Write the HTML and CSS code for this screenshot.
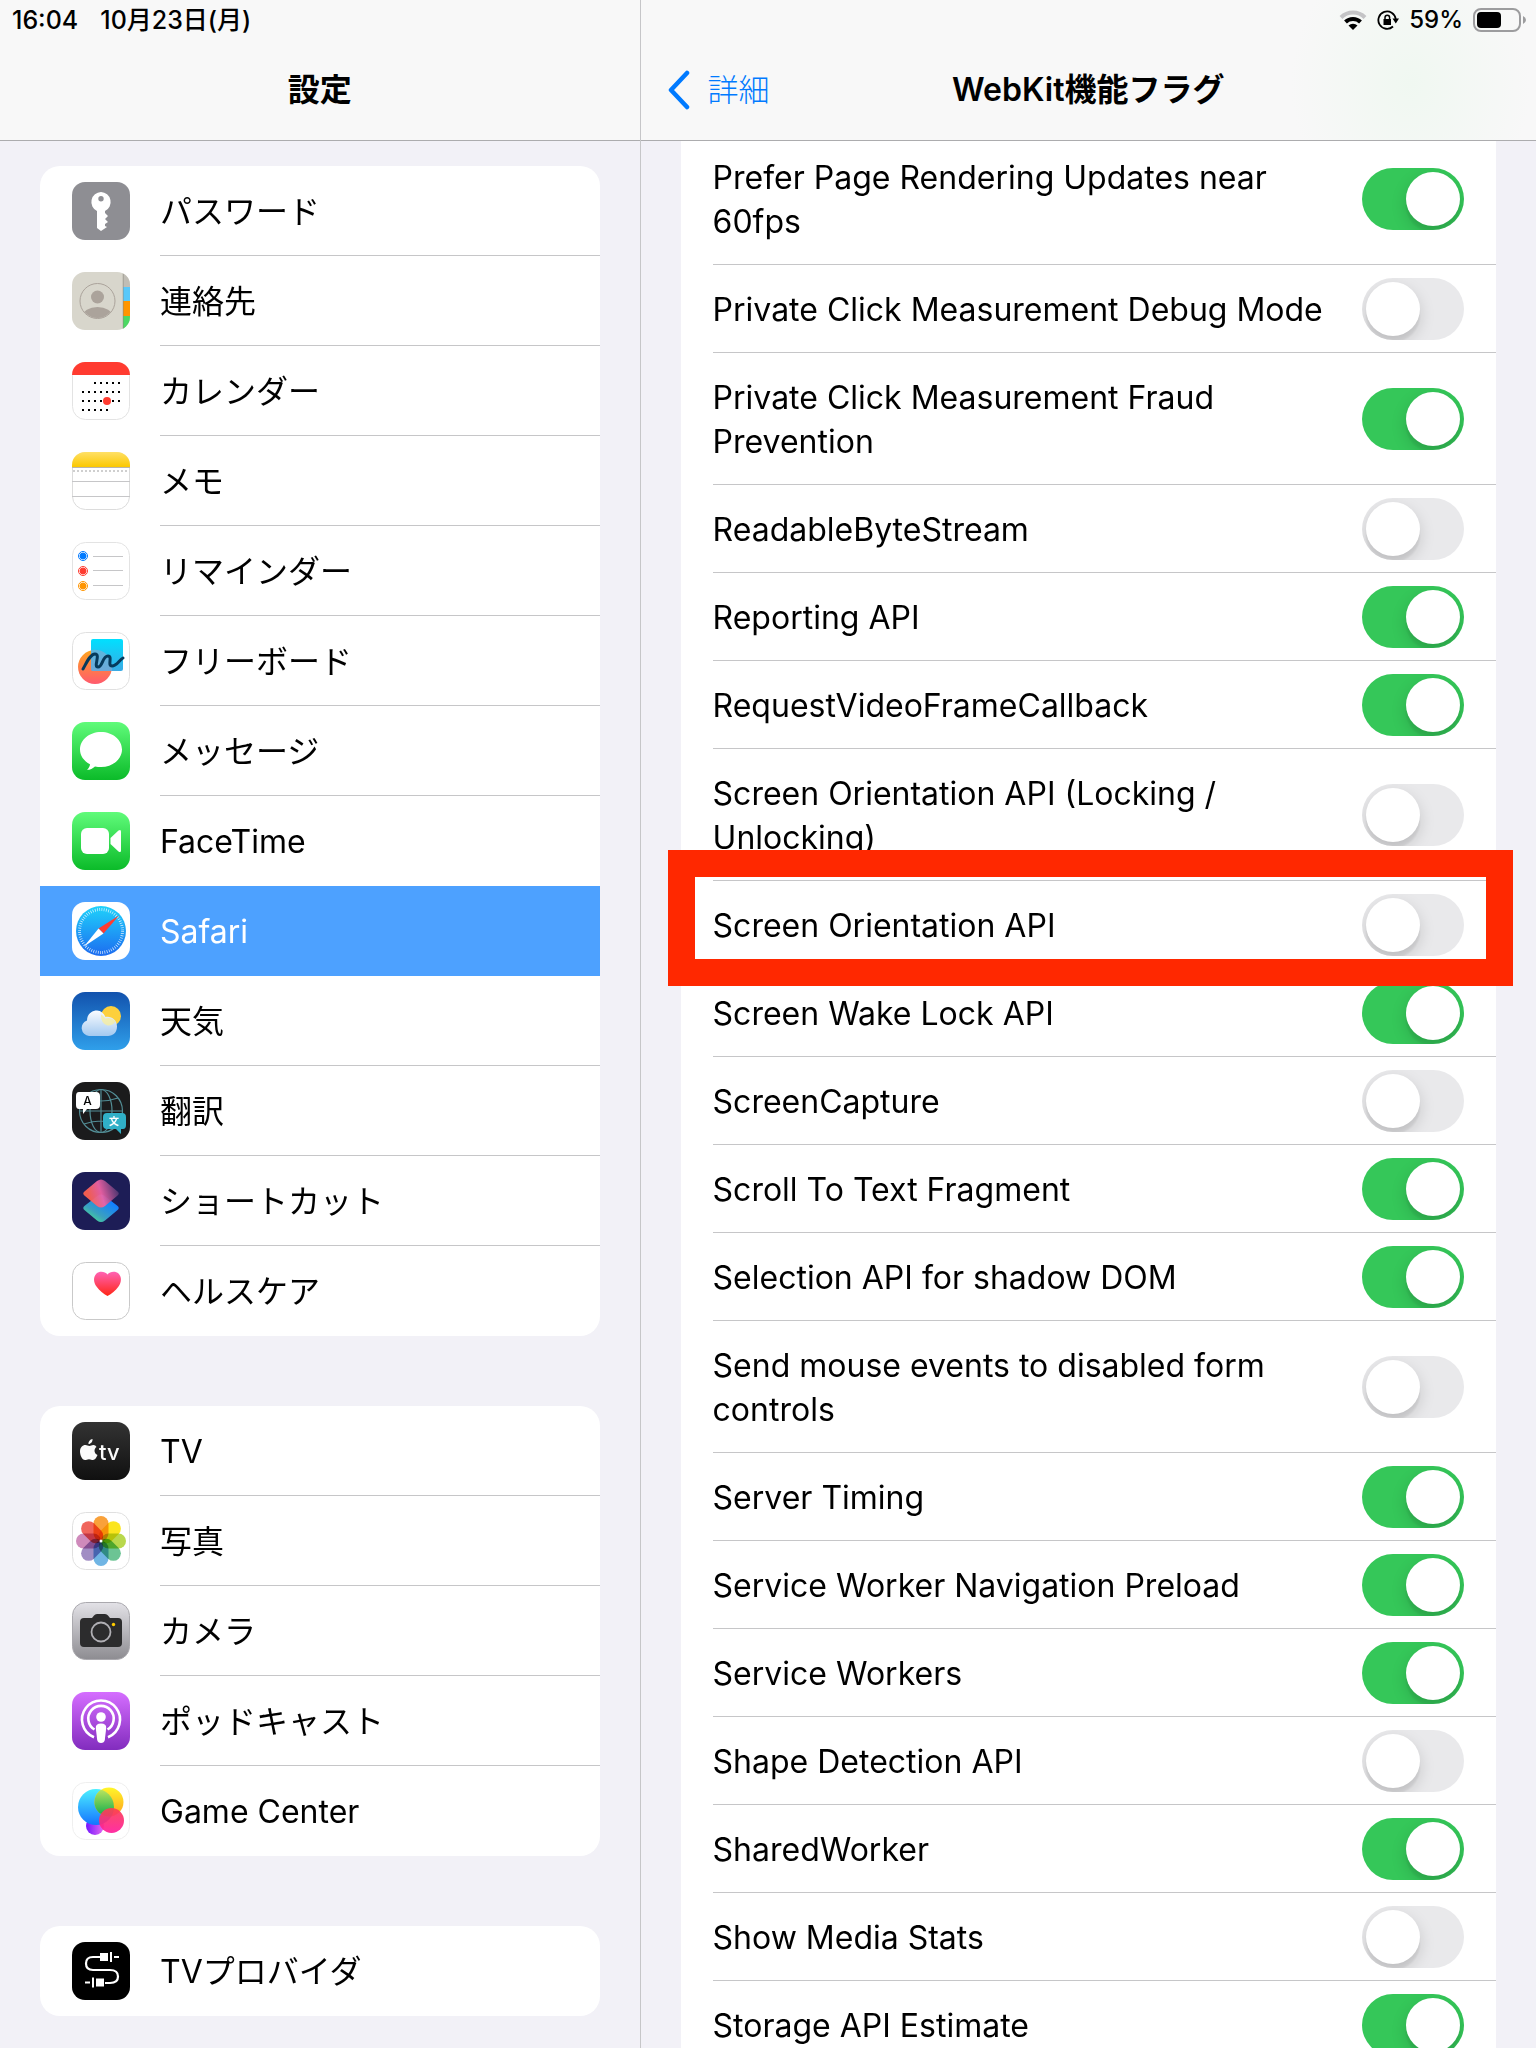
FILE: index.html
```html
<!DOCTYPE html>
<html lang="ja">
<head>
    <meta charset="UTF-8">
    <meta name="viewport" content="width=device-width, initial-scale=1.0">
    <title>設定</title>
    <link rel="stylesheet" href="styles.css">
</head>
<body>
    <!-- Dégradés partagés par les icônes -->
    <svg class="defs" width="0" height="0" aria-hidden="true">
        <defs>
            <linearGradient id="gGreen" x2="0" y2="1"><stop offset="0" stop-color="#60fb7a"/><stop offset="1" stop-color="#0bbb29"/></linearGradient>
            <linearGradient id="gYellow" x2="0" y2="1"><stop offset="0" stop-color="#ffe066"/><stop offset="1" stop-color="#fbc800"/></linearGradient>
            <linearGradient id="gCoral" x2="0" y2="1"><stop offset="0" stop-color="#ffa51e"/><stop offset="1" stop-color="#ff5a6e"/></linearGradient>
            <linearGradient id="gCyan" x2="0" y2="1"><stop offset="0" stop-color="#00e0ff"/><stop offset="1" stop-color="#3aaae4"/></linearGradient>
            <linearGradient id="gSafari" x2="0" y2="1"><stop offset="0" stop-color="#1fd2fb"/><stop offset="1" stop-color="#1d6cf0"/></linearGradient>
            <linearGradient id="gSky" x2="0" y2="1"><stop offset="0" stop-color="#1252ad"/><stop offset="1" stop-color="#2f9fea"/></linearGradient>
            <linearGradient id="gCloud" x2="0" y2="1"><stop offset="0" stop-color="#fafcff"/><stop offset="1" stop-color="#a3c9f0"/></linearGradient>
            <linearGradient id="gShort1" x1=".2" y1=".8" x2="1" y2=".6"><stop offset="0" stop-color="#ff6250"/><stop offset=".45" stop-color="#f062a5"/><stop offset="1" stop-color="#5a3a75"/></linearGradient>
            <linearGradient id="gShort2" x1=".2" y1="1" x2=".8" y2=".3"><stop offset="0" stop-color="#4ae08f"/><stop offset=".4" stop-color="#3aa0c0"/><stop offset="1" stop-color="#1280ff"/></linearGradient>
            <linearGradient id="gHeart" x2="0" y2="1"><stop offset="0" stop-color="#ff62b4"/><stop offset="1" stop-color="#ff2616"/></linearGradient>
            <linearGradient id="gTv" x2="0" y2="1"><stop offset="0" stop-color="#333"/><stop offset="1" stop-color="#101010"/></linearGradient>
            <linearGradient id="gCamera" x2="0" y2="1"><stop offset="0" stop-color="#e3e2e7"/><stop offset="1" stop-color="#8d8c91"/></linearGradient>
            <linearGradient id="gPodcast" x2="0" y2="1"><stop offset="0" stop-color="#d56eff"/><stop offset="1" stop-color="#822cbe"/></linearGradient>
            <linearGradient id="gGame1" x2="0" y2="1"><stop offset="0" stop-color="#4cf0ff"/><stop offset="1" stop-color="#1474ff"/></linearGradient>
            <linearGradient id="gGame2" x2="0" y2="1"><stop offset="0" stop-color="#fff62a"/><stop offset="1" stop-color="#ff9f1c"/></linearGradient>
            <linearGradient id="gGame3" x2="0" y2="1"><stop offset="0" stop-color="#fb4050"/><stop offset="1" stop-color="#ff1c9c"/></linearGradient>
            <linearGradient id="gGame4"><stop offset="0" stop-color="#7216ff"/><stop offset="1" stop-color="#e66af0"/></linearGradient>
            <linearGradient id="gGame5" x2="0" y2="1"><stop offset="0" stop-color="#c8e860"/><stop offset="1" stop-color="#0cab4c"/></linearGradient>
            <clipPath id="clipIcon"><rect width="58" height="58" rx="13"/></clipPath>
            <clipPath id="clipFace"><circle cx="25.500" cy="29" r="17"/></clipPath>
            <clipPath id="clipGame"><circle cx="24" cy="25" r="18"/></clipPath>
        </defs>
    </svg>

    <div class="screen">
        <!-- Colonne de gauche -->
        <aside class="sidebar">
            <header class="bar">
                <div class="status status-left">
                    <span>16:04</span>
                    <span>10月23日(月)</span>
                </div>
                <div class="nav"><h1 class="title">設定</h1></div>
            </header>

            <nav class="groups">
                <ul class="group">
                    <li><a class="app" href="#"><svg class="icon" viewBox="0 0 58 58"><rect width="58" height="58" rx="13" fill="#8e8e93"/><path fill="#fff" fill-rule="evenodd" d="M29 10a10 10 0 0 1 4 19v2l3 3-3 3 3 3-3 2v2l2 1-6 4-4-3V29a10 10 0 0 1 4-19zm0 4a2.700 2.700 0 1 0 0 5.400 2.700 2.700 0 0 0 0-5.400z"/></svg><span class="app-name">パスワード</span></a></li>
                    <li><a class="app" href="#"><svg class="icon" viewBox="0 0 58 58"><g clip-path="url(#clipIcon)"><rect width="58" height="58" fill="#d8d6cc"/><path fill="#c0bdb5" d="M51 0h7v15h-7z"/><path fill="#5ac8fa" d="M51 15h7v14h-7z"/><path fill="#ff9500" d="M51 29h7v15h-7z"/><path fill="#4cd964" d="M51 44h7v14h-7z"/><path stroke="#8c8880" stroke-width=".6" d="M51.200 0v58"/></g><g clip-path="url(#clipFace)" fill="#aba39b"><circle cx="25.500" cy="25" r="6.500"/><ellipse cx="25.500" cy="44" rx="15" ry="9"/></g><circle cx="25.500" cy="29" r="17.500" fill="none" stroke="#aba39b"/></svg><span class="app-name">連絡先</span></a></li>
                    <li><a class="app" href="#"><svg class="icon" viewBox="0 0 58 58"><rect x=".5" y=".5" width="57" height="57" rx="13" fill="#fff" stroke="#e3e3e3"/><path fill="#ff3b30" d="M0 13A13 13 0 0 1 13 0h32a13 13 0 0 1 13 13z"/><g stroke="#000" stroke-width="2" stroke-dasharray="2 4"><path d="M22 21h26M10 30h38M10 39h38M10 48h26"/></g><circle cx="35" cy="39" r="4" fill="#ff3b30"/></svg><span class="app-name">カレンダー</span></a></li>
                    <li><a class="app" href="#"><svg class="icon" viewBox="0 0 58 58"><rect x=".5" y=".5" width="57" height="57" rx="13" fill="#fff" stroke="#dcdcdc"/><path fill="url(#gYellow)" d="M0 15v-2A13 13 0 0 1 13 0h32a13 13 0 0 1 13 13v2z"/><path stroke="#b9b5aa" d="M0 15.500h58"/><path stroke="#cfcfcf" stroke-width="2" stroke-dasharray="2 2" d="M1 19h56"/><path stroke="#c6c6c8" d="M0 29.500h58M0 44.500h58"/></svg><span class="app-name">メモ</span></a></li>
                    <li><a class="app" href="#"><svg class="icon" viewBox="0 0 58 58"><rect x=".5" y=".5" width="57" height="57" rx="13" fill="#fff" stroke="#e3e3e3"/><path stroke="#c6c6c8" d="M21 14.500h30M21 28.500h30M21 43.500h30"/><g fill="#007aff" stroke="#007aff"><circle cx="11" cy="14" r="3"/><circle cx="11" cy="14" r="4.500" fill="none"/></g><g fill="#ff3b30" stroke="#ff3b30"><circle cx="11" cy="29" r="3"/><circle cx="11" cy="29" r="4.500" fill="none"/></g><g fill="#ff9500" stroke="#ff9500"><circle cx="11" cy="44" r="3"/><circle cx="11" cy="44" r="4.500" fill="none"/></g></svg><span class="app-name">リマインダー</span></a></li>
                    <li><a class="app" href="#"><svg class="icon" viewBox="0 0 58 58"><rect x=".5" y=".5" width="57" height="57" rx="13" fill="#fff" stroke="#e0e0e0"/><circle cx="23" cy="35" r="17" fill="url(#gCoral)"/><rect x="19" y="7" width="32" height="32" rx="2" fill="url(#gCyan)"/><path fill="#8ea6cf" opacity=".6" d="M19 18q18-2 21 17v4H21q-2 0-2-2z"/><path fill="none" stroke="#063a5c" stroke-width="3" stroke-linecap="round" d="M11 37c3-5 7-15 12-15 6 0-2 13 3 13 5 0 4-11 10-11 5 0-1 10 4 10 5 0 7-6 11-8"/></svg><span class="app-name">フリーボード</span></a></li>
                    <li><a class="app" href="#"><svg class="icon" viewBox="0 0 58 58"><rect width="58" height="58" rx="13" fill="url(#gGreen)"/><path fill="#fff" d="M29 10c12 0 21 8 21 17.500S41 45 29 45c-2 0-4 0-6-.6-2 2-5 3.400-8 3.400 1.500-1.200 3-3.500 3-5.500C12 39 8 34 8 27.500 8 18 17 10 29 10z"/></svg><span class="app-name">メッセージ</span></a></li>
                    <li><a class="app" href="#"><svg class="icon" viewBox="0 0 58 58"><rect width="58" height="58" rx="13" fill="url(#gGreen)"/><rect x="9" y="16" width="28" height="26" rx="6" fill="#fff"/><path fill="#fff" d="M38.500 26l8-7.500q2.500-1.500 2.500 1v19q0 2.500-2.500 1l-8-7.500z"/></svg><span class="app-name">FaceTime</span></a></li>
                    <li><a class="app selected" href="#" aria-current="page"><svg class="icon" viewBox="0 0 58 58"><rect width="58" height="58" rx="13" fill="#fff"/><circle cx="29" cy="29" r="25" fill="url(#gSafari)"/><circle cx="29" cy="29" r="21.500" fill="none" stroke="#fff" stroke-width="3" stroke-dasharray=".7 1.550" opacity=".85"/><path fill="#ff3b30" d="M47 13.500L26.500 26.500l5 5z"/><path fill="#fff" d="M12 44.500L31.500 31.500l-5-5z"/></svg><span class="app-name">Safari</span></a></li>
                    <li><a class="app" href="#"><svg class="icon" viewBox="0 0 58 58"><rect width="58" height="58" rx="13" fill="url(#gSky)"/><circle cx="39" cy="24" r="10" fill="#fdd03c"/><path fill="url(#gCloud)" d="M17 44a8 8 0 0 1-2-15.500C15 22 20 18.500 25 18.500c4 0 7 3 8.500 6.500 6-1 11.500 3 11.500 9.500 0 6-4 9.500-9 9.500z"/><path fill="#f6eda0" opacity=".8" d="M29 22.500q3 1.500 4 4 6-2 10.500 3-3 4.500-8 4-7-2-6.500-11z"/></svg><span class="app-name">天気</span></a></li>
                    <li><a class="app" href="#"><svg class="icon" viewBox="0 0 58 58"><rect width="58" height="58" rx="13" fill="#1b1b1c"/><g fill="none" stroke="#528d95" stroke-width="1.200"><circle cx="29" cy="29" r="21.500"/><ellipse cx="29" cy="29" rx="11" ry="21.500"/><path d="M29 7.500v43M7.500 29h43M12 16q17 6 34 0M12 42q17-6 34 0"/></g><path fill="#fff" d="M7 10h17q4 0 4 4v9q0 4-4 4h-9l-4 5v-5H7q-3 0-3-4v-9q0-4 3-4z"/><path fill="#30b0c7" d="M35 31h15q4 0 4 4v8q0 4-3 4h-2v5l-5-5h-9q-4 0-4-4v-8q0-4 4-4z"/><text class="glyph-a" x="15.500" y="23" text-anchor="middle">A</text><text class="glyph-b" x="42" y="43" text-anchor="middle">文</text></svg><span class="app-name">翻訳</span></a></li>
                    <li><a class="app" href="#"><svg class="icon" viewBox="0 0 58 58"><rect width="58" height="58" rx="13" fill="#1d1d56"/><path fill="url(#gShort2)" d="M26 23.500q3-2 6 0l13 10q3.500 2.500 0 5l-12 10q-4 3-8 0l-12-10q-3.500-2.500 0-5z"/><path fill="url(#gShort1)" opacity=".93" d="M25 9q4-3 8 0l12 10q3.500 2.500 0 5L33 34q-4 3-8 0L13 24q-3.500-2.500 0-5z"/></svg><span class="app-name">ショートカット</span></a></li>
                    <li><a class="app" href="#"><svg class="icon" viewBox="0 0 58 58"><rect x=".5" y=".5" width="57" height="57" rx="13" fill="#fff" stroke="#c9c9c9"/><path fill="url(#gHeart)" d="M35.500 12.500C38 9 44 9 46.500 11.500c3.500 3.500 3 9 0 13-3 4-7 7.500-11 9.500-4-2-8-5.500-11-9.500-3-4-3.500-9.500 0-13C27 9 33 9 35.500 12.500z"/></svg><span class="app-name">ヘルスケア</span></a></li>
                </ul>

                <ul class="group">
                    <li><a class="app" href="#"><svg class="icon" viewBox="0 0 58 58"><rect width="58" height="58" rx="13" fill="url(#gTv)"/><path fill="#fafafa" d="M20.500 17c.3 2.500-1.500 5-4 5-.2-2.400 1.800-4.700 4-5zM24.500 25c-3 2-2.500 6.500 1 8-1 2.500-2.500 5-4.500 5-1.500 0-2-.8-4-.8s-2.500.8-4 .8C10 38 8 33 8 29.500c0-4 2.500-6.500 5.500-6.500 1.500 0 2.500 1 4 1 1.200 0 2.500-1.200 4-1 1.200.1 2.400.8 3 2z"/><text class="glyph-tv" x="27" y="38">tv</text></svg><span class="app-name">TV</span></a></li>
                    <li><a class="app" href="#"><svg class="icon" viewBox="0 0 58 58"><rect x=".5" y=".5" width="57" height="57" rx="13" fill="#fff" stroke="#e0e0e0"/><g class="petals"><rect x="21.500" y="4" width="15" height="25" rx="7.500" fill="#f9a13a"/><rect x="21.500" y="4" width="15" height="25" rx="7.500" fill="#fbe51e" transform="rotate(45 29 29)"/><rect x="21.500" y="4" width="15" height="25" rx="7.500" fill="#b9d84c" transform="rotate(90 29 29)"/><rect x="21.500" y="4" width="15" height="25" rx="7.500" fill="#6cc494" transform="rotate(135 29 29)"/><rect x="21.500" y="4" width="15" height="25" rx="7.500" fill="#70b5e4" transform="rotate(180 29 29)"/><rect x="21.500" y="4" width="15" height="25" rx="7.500" fill="#a18dc4" transform="rotate(225 29 29)"/><rect x="21.500" y="4" width="15" height="25" rx="7.500" fill="#cf8abb" transform="rotate(270 29 29)"/><rect x="21.500" y="4" width="15" height="25" rx="7.500" fill="#f0655c" transform="rotate(315 29 29)"/></g><circle cx="29" cy="29" r="1.500" fill="#fff"/></svg><span class="app-name">写真</span></a></li>
                    <li><a class="app" href="#"><svg class="icon" viewBox="0 0 58 58"><rect x=".5" y=".5" width="57" height="57" rx="13" fill="url(#gCamera)" stroke="#aaa9ae"/><path fill="#2c2c2d" d="M12 16h8l2-2.500q1-1.500 3-1.500h8q2 0 3 1.500l2 2.500h8q4 0 4 4v21q0 4-4 4H12q-4 0-4-4V20q0-4 4-4z"/><circle cx="29" cy="30" r="9.500" fill="none" stroke="#b0afb4" stroke-width="1.800"/><circle cx="41.500" cy="22.500" r="1.700" fill="#fc0"/></svg><span class="app-name">カメラ</span></a></li>
                    <li><a class="app" href="#"><svg class="icon" viewBox="0 0 58 58"><rect width="58" height="58" rx="13" fill="url(#gPodcast)"/><g fill="none" stroke="#fff" stroke-width="2.600"><path d="M22 45.200a19 19 0 1 1 14 0"/><path d="M22.500 37.500a12.700 12.700 0 1 1 13 0"/></g><circle cx="29" cy="25" r="4.800" fill="#fff"/><path fill="#fff" d="M29 31.500q5.500 0 5.200 4.500l-1.400 12q-.6 3-3.800 3t-3.800-3l-1.400-12q-.3-4.500 5.200-4.500z"/></svg><span class="app-name">ポッドキャスト</span></a></li>
                    <li><a class="app" href="#"><svg class="icon" viewBox="0 0 58 58"><rect x=".5" y=".5" width="57" height="57" rx="13" fill="#fff" stroke="#efefef"/><circle cx="23" cy="44" r="9" fill="url(#gGame4)"/><circle cx="24" cy="25" r="18" fill="url(#gGame1)"/><circle cx="37" cy="20" r="14.500" fill="url(#gGame2)"/><circle cx="37" cy="20" r="14.500" fill="url(#gGame5)" clip-path="url(#clipGame)"/><circle cx="39.500" cy="38.500" r="12.500" fill="url(#gGame3)" opacity=".92"/></svg><span class="app-name">Game Center</span></a></li>
                </ul>

                <ul class="group">
                    <li><a class="app" href="#"><svg class="icon" viewBox="0 0 58 58"><rect width="58" height="58" rx="13"/><g fill="none" stroke="#fff" stroke-width="2.200"><path d="M28 15h-7q-7 0-7 6.500t7 6.500h17q8 0 8 6.500t-8 6.500h-5M42 15h5M13 40.500h5"/></g><path fill="#fff" d="M28 11h8v8h-8zM38 10h2v10h-2zM24 36.500h8v8h-8zM20 35.500h2v10h-2z"/></svg><span class="app-name">TVプロバイダ</span></a></li>
                </ul>
            </nav>
        </aside>

        <!-- Colonne de droite -->
        <main class="detail">
            <header class="bar bar-detail">
                <div class="status status-right">
                    <svg width="28" height="22" viewBox="0 0 28 22"><g fill="none" stroke-width="4"><path stroke="#c4c4c6" d="M2 8.500a17 17 0 0 1 24 0"/><path stroke="#000" d="M6.500 13a10.700 10.700 0 0 1 15 0"/></g><path d="M14 21l-4.500-4.500a6.400 6.400 0 0 1 9 0z"/></svg>
                    <svg width="22" height="22" viewBox="0 0 22 22"><path fill="none" stroke="#000" stroke-width="1.800" d="M16 17.500A8.700 8.700 0 1 1 18.700 10"/><path d="M15.500 9.500h6.500l-3.200 5zM6.500 10h7.500v6H6.500z"/><path fill="none" stroke="#000" stroke-width="1.500" d="M8 10V8.500a2.300 2.300 0 0 1 4.600 0V10"/></svg>
                    <span>59%</span>
                    <svg width="54" height="24" viewBox="0 0 54 24"><rect x="1" y="1" width="46" height="22" rx="7" fill="none" stroke="#9c9c9e" stroke-width="2"/><rect x="4" y="4" width="24" height="16" rx="4"/><path fill="#9c9c9e" d="M50 8q3 1.500 3 4t-3 4z"/></svg>
                </div>
                <div class="nav">
                    <a class="back" href="#"><svg width="24" height="40" viewBox="0 0 24 40"><path fill="none" stroke="#007aff" stroke-width="4.500" stroke-linecap="round" stroke-linejoin="round" d="M20 3L4 20l16 17"/></svg>詳細</a>
                    <h2 class="title">WebKit機能フラグ</h2>
                </div>
            </header>

            <ul class="flags">
                <li><label class="flag"><span>Prefer Page Rendering Updates near 60fps</span><input class="switch" type="checkbox" role="switch" checked></label></li>
                <li><label class="flag"><span>Private Click Measurement Debug Mode</span><input class="switch" type="checkbox" role="switch"></label></li>
                <li><label class="flag"><span>Private Click Measurement Fraud Prevention</span><input class="switch" type="checkbox" role="switch" checked></label></li>
                <li><label class="flag"><span>ReadableByteStream</span><input class="switch" type="checkbox" role="switch"></label></li>
                <li><label class="flag"><span>Reporting API</span><input class="switch" type="checkbox" role="switch" checked></label></li>
                <li><label class="flag"><span>RequestVideoFrameCallback</span><input class="switch" type="checkbox" role="switch" checked></label></li>
                <li><label class="flag"><span>Screen Orientation API (Locking / Unlocking)</span><input class="switch" type="checkbox" role="switch"></label></li>
                <li class="marked"><label class="flag"><span>Screen Orientation API</span><input class="switch" type="checkbox" role="switch"></label></li>
                <li><label class="flag"><span>Screen Wake Lock API</span><input class="switch" type="checkbox" role="switch" checked></label></li>
                <li><label class="flag"><span>ScreenCapture</span><input class="switch" type="checkbox" role="switch"></label></li>
                <li><label class="flag"><span>Scroll To Text Fragment</span><input class="switch" type="checkbox" role="switch" checked></label></li>
                <li><label class="flag"><span>Selection API for shadow DOM</span><input class="switch" type="checkbox" role="switch" checked></label></li>
                <li><label class="flag"><span>Send mouse events to disabled form controls</span><input class="switch" type="checkbox" role="switch"></label></li>
                <li><label class="flag"><span>Server Timing</span><input class="switch" type="checkbox" role="switch" checked></label></li>
                <li><label class="flag"><span>Service Worker Navigation Preload</span><input class="switch" type="checkbox" role="switch" checked></label></li>
                <li><label class="flag"><span>Service Workers</span><input class="switch" type="checkbox" role="switch" checked></label></li>
                <li><label class="flag"><span>Shape Detection API</span><input class="switch" type="checkbox" role="switch"></label></li>
                <li><label class="flag"><span>SharedWorker</span><input class="switch" type="checkbox" role="switch" checked></label></li>
                <li><label class="flag"><span>Show Media Stats</span><input class="switch" type="checkbox" role="switch"></label></li>
                <li><label class="flag"><span>Storage API Estimate</span><input class="switch" type="checkbox" role="switch" checked></label></li>
            </ul>
        </main>
    </div>
</body>
</html>
```

FILE: styles.css
```css
/* Global Styles */
* {
    box-sizing: border-box;
}

body {
    margin: 0;
    font-family: Inter, "Noto Sans CJK JP", sans-serif;
    font-size: 32px;
    line-height: 44px;
    color: #000;
    background-color: #f2f1f7;
}

ul {
    list-style: none;
    margin: 0;
    padding: 0;
}

a {
    color: inherit;
    text-decoration: none;
}

.defs {
    position: absolute;
}

.screen {
    display: flex;
    height: 100vh;
    overflow: hidden;
}

.sidebar {
    flex: 5;
    border-right: 1px solid #c6c6c8;
}

.detail {
    flex: 7;
}

/* Barres du haut */
.bar {
    position: relative;
    z-index: 1;
    background-color: #f8f8f8;
    border-bottom: 1px solid #acacae;
}

.bar-detail {
    background-image: radial-gradient(ellipse 120px 140px at 86% 60%, #f0f8f1, #f8f8f8);
}

.status {
    display: flex;
    align-items: center;
    height: 40px;
    font-size: 24px;
    font-weight: 500;
}

.status-left {
    gap: 22px;
    padding: 0 12px;
    font-size: 25px;
}

.status-right {
    justify-content: flex-end;
    gap: 10px;
    padding: 0 9px;
}

.nav {
    display: grid;
    grid-template-columns: 1fr auto 1fr;
    align-items: center;
    height: 100px;
}

.title {
    grid-column: 2;
    margin: 0;
    font-size: 32px;
    font-weight: 600;
}

.back {
    display: flex;
    align-items: center;
    gap: 17px;
    padding-left: 26px;
    font-size: 31px;
    font-weight: 300;
    color: #007aff;
}

/* Liste des apps */
.groups {
    display: flex;
    flex-direction: column;
    gap: 70px;
    padding: 25px 40px;
}

.group {
    background-color: #fff;
    border-radius: 20px;
}

.app {
    display: flex;
    gap: 30px;
    height: 90px;
    padding-left: 32px;
}

.icon {
    flex: none;
    width: 58px;
    height: 58px;
    margin-top: 16px;
}

.app-name {
    flex: 1;
    padding: 24px 0 21px;
    border-bottom: 1px solid #c6c6c8;
}

.group li:last-child .app-name,
.selected .app-name,
.group li:has(+ li .selected) .app-name {
    border-bottom-color: transparent;
}

.selected {
    color: #fff;
    background-color: #4da1ff;
}

.glyph-a {
    font-size: 12px;
    font-weight: 500;
}

.glyph-b {
    font-size: 10px;
    font-weight: 700;
    fill: #fff;
}

.glyph-tv {
    font-size: 22px;
    font-weight: 500;
    fill: #fafafa;
}

.petals {
    isolation: isolate;
}

.petals rect {
    mix-blend-mode: multiply;
}

/* Liste des drapeaux */
.flags {
    margin: -8px 40px 0;
    padding-left: 32px;
    background-color: #fff;
}

.flags li {
    position: relative;
    border-bottom: 1px solid #c6c6c8;
}

.flag {
    display: flex;
    align-items: center;
    justify-content: space-between;
    gap: 16px;
    padding: 23px 32px 20px 0;
}

.switch {
    appearance: none;
    flex: none;
    width: 102px;
    height: 62px;
    margin: -10px 0 -8px;
    padding: 4px;
    border-radius: 31px;
    background-color: #e9e9eb;
    overflow: hidden;
}

.switch::before {
    content: "";
    display: block;
    width: 54px;
    height: 54px;
    border-radius: 50%;
    background-color: #fff;
    box-shadow: 0 6px 16px rgba(0, 0, 0, 0.15), 0 6px 2px rgba(0, 0, 0, 0.06);
}

.switch:checked {
    background-color: #35c759;
}

.switch:checked::before {
    margin-left: auto;
}

/* Cadre rouge */
.marked::after {
    content: "";
    position: absolute;
    z-index: 1;
    top: -31px;
    right: -17px;
    bottom: -18px;
    left: -45px;
    border: 27px solid #ff2800;
    pointer-events: none;
}
```
